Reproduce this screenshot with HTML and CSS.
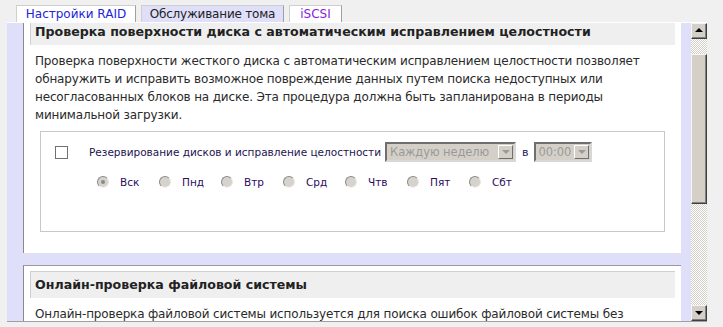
FILE: index.html
```html
<!DOCTYPE html>
<html lang="ru">
<head>
	<meta charset="UTF-8">
	<title>Обслуживание тома</title>
	<link rel="stylesheet" href="styles.css">
</head>
<body>
	<div class="tabs">
		<a href="javascript:void(0);" class="tab tab-link">Настройки RAID</a>
		<a href="javascript:void(0);" class="tab tab-current">Обслуживание тома</a>
		<a href="javascript:void(0);" class="tab tab-visited">iSCSI</a>
	</div>
	<div class="frame">
		<div class="viewport">
			<div class="pages">
				<div class="panel panel-first">
					<h2 class="panel-title">Проверка поверхности диска с автоматическим исправлением целостности</h2>
					<p class="panel-text">Проверка поверхности жесткого диска с автоматическим исправлением целостности позволяет обнаружить и исправить возможное повреждение данных путем поиска недоступных или несогласованных блоков на диске. Эта процедура должна быть запланирована в периоды минимальной загрузки.</p>
					<div class="options">
						<div class="opt-row">
							<span class="checkbox"></span>
							<span class="opt-label">Резервирование дисков и исправление целостности</span>
							<span class="select select-wide"><span class="select-value">Каждую неделю</span><span class="select-arrow"></span></span>
							<span class="opt-label opt-at">в</span>
							<span class="select select-time"><span class="select-value">00:00</span><span class="select-arrow"></span></span>
						</div>
						<div class="days">
							<span class="day"><span class="radio checked"></span>Вск</span>
							<span class="day"><span class="radio"></span>Пнд</span>
							<span class="day"><span class="radio"></span>Втр</span>
							<span class="day"><span class="radio"></span>Срд</span>
							<span class="day"><span class="radio"></span>Чтв</span>
							<span class="day"><span class="radio"></span>Пят</span>
							<span class="day"><span class="radio"></span>Сбт</span>
						</div>
					</div>
				</div>
				<div class="panel">
					<h2 class="panel-title">Онлайн-проверка файловой системы</h2>
					<p class="panel-text">Онлайн-проверка файловой системы используется для поиска ошибок файловой системы без прерывания работы пользователей.</p>
				</div>
			</div>
		</div>
		<div class="scrollbar">
			<span class="sb-btn sb-up"></span>
			<span class="sb-track sb-track-top"></span>
			<span class="sb-thumb"></span>
			<span class="sb-track sb-track-bottom"></span>
			<span class="sb-btn sb-down"></span>
		</div>
	</div>
</body>
</html>
```

FILE: styles.css
```css
body{
	margin: 0;
	background-color: #f0f0f0;
	font-family: "DejaVu Sans", Verdana, sans-serif;
	color: #222;
}
.tabs{
	display: flex;
	gap: 5px;
	padding: 5px 0 0 16px;
	height: 22px;
	box-sizing: border-box;
}
.tab{
	display: block;
	height: 17px;
	box-sizing: border-box;
	border: 1px solid #cfcfcf;
	border-right-color: #a0a0a0;
	border-bottom: 0;
	background-color: #fff;
	font-size: 12px;
	line-height: 17px;
	text-align: center;
	text-decoration: none;
	white-space: nowrap;
}
.tab-link{
	width: 120px;
	color: #2323d8;
}
.tab-current{
	width: 143px;
	background-color: #dfdffa;
	color: #222;
	letter-spacing: -0.2px;
}
.tab-visited{
	width: 53px;
	color: #8b1be0;
}
.frame{
	display: flex;
	width: 700px;
	height: 300px;
	margin-left: 7px;
	border-top: 1px solid #fff;
	border-bottom: 1px solid #a0a0a0;
	box-sizing: border-box;
	background-color: #dfdffa;
}
.viewport{
	flex: 1;
	overflow: hidden;
	padding: 0 10px 0 16px;
}
.pages{
	margin-top: -11px;
}
.panel{
	background-color: #fff;
	border-left: 1px solid #8a8a8a;
	border-top: 1px solid #9a9a9a;
	padding-bottom: 21px;
}
.panel-first{
	margin-bottom: 12px;
}
.panel-title{
	margin: 5px 6px 0;
	height: 27px;
	padding-left: 4px;
	box-sizing: border-box;
	border-top: 1px solid #cfcfcf;
	border-left: 1px solid #cfcfcf;
	background-color: #efefef;
	font-size: 12.6px;
	line-height: 26px;
	color: #222;
}
.panel-text{
	margin: 0;
	padding: 7px 11px 0;
	font-size: 12px;
	letter-spacing: -0.16px;
	line-height: 18px;
	color: #2a2a2a;
}
.options{
	margin: 7px 16px 0;
	height: 101px;
	box-sizing: border-box;
	border: 1px solid #c8c8c8;
	padding-top: 10px;
}
.opt-row{
	display: flex;
	align-items: center;
	height: 20px;
	padding-left: 14px;
}
.checkbox{
	width: 13px;
	height: 13px;
	box-sizing: border-box;
	border: 1px solid #707070;
	background-color: #fff;
	margin-right: 21px;
}
.opt-label{
	font-size: 10.5px;
	color: #1c1450;
}
.opt-at{
	margin: 0 5px 0 6px;
	font-size: 11px;
}
.select{
	display: flex;
	align-items: center;
	height: 20px;
	box-sizing: border-box;
	border: 2px solid;
	border-color: #6f6f6f #d8d8d8 #d8d8d8 #6f6f6f;
	background-color: #d4d0c8;
	margin-left: 4px;
	padding: 0 1px 0 3px;
}
.select-wide{
	width: 131px;
}
.select-time{
	width: 58px;
	margin-left: 0;
}
.select-value{
	flex: 1;
	font-size: 11.5px;
	letter-spacing: -0.1px;
	color: #9a9a9a;
	white-space: nowrap;
	overflow: hidden;
}
.select-arrow{
	position: relative;
	flex: none;
	width: 15px;
	height: 14px;
	box-sizing: border-box;
	border: 1px solid;
	border-color: #fff #6f6f6f #6f6f6f #fff;
	background-color: #d4d0c8;
}
.select-arrow:after{
	content: "";
	position: absolute;
	left: 3px;
	top: 4px;
	border-left: 4px solid transparent;
	border-right: 4px solid transparent;
	border-top: 4px solid #9a9a9a;
}
.days{
	display: flex;
	padding: 14px 0 0 56px;
}
.day{
	display: flex;
	align-items: center;
	width: 62px;
	font-size: 10.5px;
	color: #2b0a60;
}
.radio{
	width: 12px;
	height: 12px;
	border-radius: 50%;
	box-sizing: border-box;
	border: 1px solid;
	border-color: #8a8a8a #e8e8e8 #f4f4f4 #8a8a8a;
	background-color: #d6d3cc;
	margin-right: 11px;
	position: relative;
}
.radio.checked:after{
	content: "";
	position: absolute;
	left: 3px;
	top: 3px;
	width: 4px;
	height: 4px;
	border-radius: 50%;
	background-color: #8a8a8a;
}
.scrollbar{
	display: flex;
	flex-direction: column;
	width: 16px;
}
.sb-btn,
.sb-thumb{
	position: relative;
	box-sizing: border-box;
	border: 1px solid;
	border-color: #f4f4f4 #404040 #404040 #f4f4f4;
	box-shadow: inset -1px -1px 0 #808080;
	background-color: #d4d0c8;
}
.sb-btn{
	height: 16px;
}
.sb-thumb{
	height: 150px;
}
.sb-track{
	background-color: #fff;
	background-image: repeating-conic-gradient(#d4d0c8 0 25%, #fff 0 50%);
	background-size: 2px 2px;
}
.sb-track-top{
	height: 15px;
}
.sb-track-bottom{
	flex: 1;
}
.sb-up:after,
.sb-down:after{
	content: "";
	position: absolute;
	left: 3px;
	border-left: 4px solid transparent;
	border-right: 4px solid transparent;
}
.sb-up:after{
	top: 4px;
	border-bottom: 4px solid #000;
}
.sb-down:after{
	top: 5px;
	border-top: 4px solid #000;
}
```
